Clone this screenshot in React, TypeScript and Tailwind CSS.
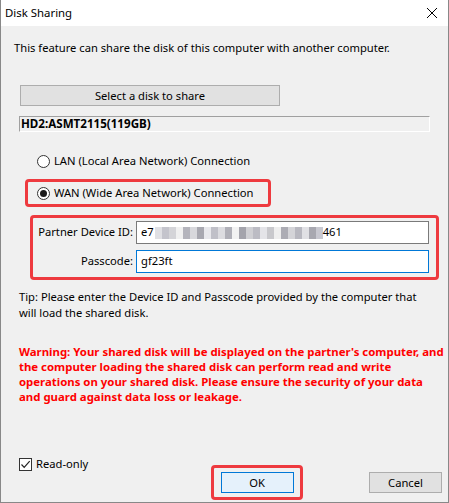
import React from "react";

const font = { fontFamily: '"Segoe UI", "Noto Sans", "Open Sans", sans-serif' };

const blurShades = [
  "#e0e0e4", "#c4c4cc", "#d4d4d8", "#f0f0f0", "#b4b4bc", "#d8d8dc", "#a8a8b0", "#e8e8ec",
  "#c0c0c8", "#dcdce0", "#b0b0b8", "#f2f2f2", "#a4a4ac", "#d0d0d4", "#bcbcc4", "#e4e4e8",
  "#c8c8cc", "#eeeeee", "#acacb4", "#d4d4d8", "#b8b8c0", "#e0e0e4", "#a8a8b0", "#c8c8d0",
];

export default function App() {
  return (
    <div
      className="w-[449px] h-[503px] bg-[#f0f0f0] border-l border-r border-b border-[#888888] flex flex-col text-[11.2px] text-black overflow-hidden whitespace-nowrap"
      style={font}
    >
      {/* Title bar */}
      <div className="h-[26px] bg-white flex items-center justify-between pl-[4px] pr-[9px] shrink-0">
        <span className="text-[11.4px]">Disk Sharing</span>
        <svg width="12" height="12" viewBox="0 0 12 12" className="mr-[1px]">
          <path d="M1 1 L11 11 M11 1 L1 11" stroke="#000" strokeWidth="1" fill="none" />
        </svg>
      </div>

      <div className="flex flex-col pl-[18px] pr-[10px] grow">
        <div className="pt-[13px] ml-[-5px] leading-[17px]">
          This feature can share the disk of this computer with another computer.
        </div>

        <button className="mt-[29px] ml-[1px] w-[260px] h-[21px] bg-[#e1e1e1] border border-[#adadad] flex items-center justify-center leading-none">
          Select a disk to share
        </button>

        <div className="mt-[10px] w-[411px] h-[16px] border-t border-l border-[#a0a0a0] border-b border-r border-b-white border-r-white flex items-center font-bold text-[11.6px] leading-none pl-[1px]">
          HD2:ASMT2115(119GB)
        </div>

        {/* LAN radio */}
        <div className="mt-[22px] ml-[18px] flex items-center gap-[4px] h-[14px]">
          <span className="w-[13px] h-[13px] rounded-full border border-[#333333] bg-white" />
          <span>LAN (Local Area Network) Connection</span>
        </div>

        {/* WAN radio */}
        <div className="mt-[11px] ml-[6px] w-[246px] h-[28px] border-[3px] border-[#ee3a3f] rounded-[4px] flex items-center pl-[9px] gap-[4px]">
          <span className="w-[13px] h-[13px] rounded-full border border-[#333333] bg-white flex items-center justify-center">
            <span className="w-[7px] h-[7px] rounded-full bg-[#1a1a1a]" />
          </span>
          <span>WAN (Wide Area Network) Connection</span>
        </div>

        {/* Partner box */}
        <div className="mt-[8px] ml-[11px] w-[409px] h-[65px] border-[3px] border-[#ee3a3f] rounded-[4px] flex flex-col pt-[3px] gap-[6px]">
          <div className="flex items-center">
            <span className="w-[103px] text-right pr-[3px]">Partner Device ID:</span>
            <div className="w-[293px] h-[23px] bg-white border border-[#7a7a7a] flex items-center pl-[4px]">
              <span>e7</span>
              <span className="flex h-[12px] items-stretch ml-[1px]">
                {blurShades.map((c, i) => (
                  <span key={i} className="w-[7px]" style={{ backgroundColor: c }} />
                ))}
              </span>
              <span>461</span>
            </div>
          </div>
          <div className="flex items-center">
            <span className="w-[103px] text-right pr-[3px]">Passcode:</span>
            <div className="w-[293px] h-[23px] bg-white border border-[#0078d7] flex items-center pl-[4px]">
              gf23ft
            </div>
          </div>
        </div>

        <div className="mt-[9px] leading-[16px]">
          Tip: Please enter the Device ID and Passcode provided by the computer that
          <br />
          will load the shared disk.
        </div>

        <div className="mt-[23px] leading-[15px] font-bold text-[11.4px] text-[#ff0000]">
          Warning: Your shared disk will be displayed on the partner&apos;s computer, and
          <br />
          the computer loading the shared disk can perform read and write
          <br />
          operations on your shared disk. Please ensure the security of your data
          <br />
          and guard against data loss or leakage.
        </div>

        <div className="grow" />

        <div className="flex items-start pb-[2px]">
          <div className="w-[192px] shrink-0">
            <div className="flex items-center gap-[4px] mt-[-9px]">
              <span className="w-[13px] h-[13px] border border-[#333333] bg-white flex items-center justify-center">
                <svg width="11" height="11" viewBox="0 0 11 11">
                  <path d="M1.5 5.5 L4.2 8.3 L9.7 2.2" stroke="#222" strokeWidth="1.2" fill="none" />
                </svg>
              </span>
              <span>Read-only</span>
            </div>
          </div>
          <div className="w-[92px] h-[35px] shrink-0 border-[3px] border-[#ee3a3f] rounded-[4px] flex items-center justify-center">
            <button className="w-[73px] h-[21px] bg-[#e5f1fb] border border-[#0078d7] flex items-center justify-center leading-none">
              OK
            </button>
          </div>
          <button className="ml-[66px] mt-[7px] w-[73px] h-[21px] shrink-0 bg-[#e1e1e1] border border-[#adadad] flex items-center justify-center leading-none">
            Cancel
          </button>
        </div>
      </div>
    </div>
  );
}
